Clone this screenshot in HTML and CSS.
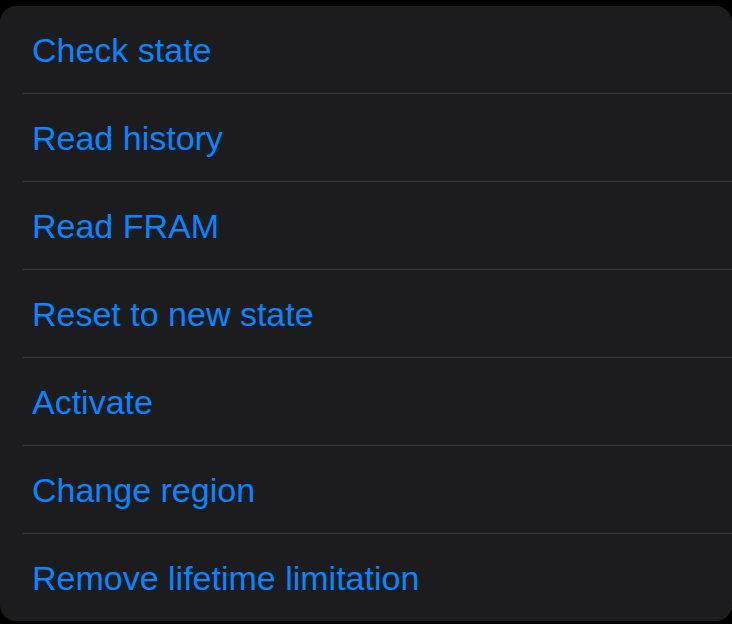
FILE: index.html
```html
<!DOCTYPE html>
<html>
<head>
<meta charset="utf-8">
<link rel="stylesheet" href="styles.css">
</head>
<body>
<div class="card">
  <div class="row"><span class="label">Check state</span></div>
  <div class="row"><span class="label">Read history</span></div>
  <div class="row"><span class="label">Read FRAM</span></div>
  <div class="row"><span class="label">Reset to new state</span></div>
  <div class="row"><span class="label">Activate</span></div>
  <div class="row"><span class="label">Change region</span></div>
  <div class="row"><span class="label">Remove lifetime limitation</span></div>
</div>
</body>
</html>
```
FILE: styles.css
```css
html, body {
  margin: 0;
  padding: 0;
  background: #000;
  width: 732px;
  height: 624px;
  overflow: hidden;
}
body {
  padding-top: 6px;
  box-sizing: border-box;
  font-family: "Liberation Sans", Arial, sans-serif;
}
.card {
  background: #1c1c1e;
  border-radius: 16px;
  padding-left: 23px;
  height: 615px;
  display: flex;
  flex-direction: column;
}
.row {
  height: 87px;
  display: flex;
  align-items: center;
  padding-left: 9px;
  border-bottom: 1px solid #38383a;
  flex-shrink: 0;
}
.row:last-child {
  border-bottom: none;
}
.label {
  color: #0a84ff;
  font-size: 34px;
  line-height: 40px;
  padding-top: 1px;
}
```
